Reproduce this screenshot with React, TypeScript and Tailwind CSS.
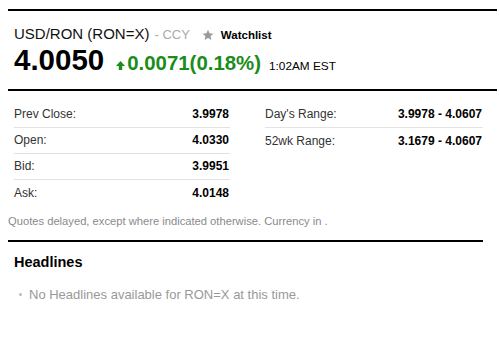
import React from "react";

const leftRows = [
  { label: "Prev Close:", value: "3.9978" },
  { label: "Open:", value: "4.0330" },
  { label: "Bid:", value: "3.9951" },
  { label: "Ask:", value: "4.0148" },
];

const rightRows = [
  { label: "Day's Range:", value: "3.9978 - 4.0607" },
  { label: "52wk Range:", value: "3.1679 - 4.0607" },
];

const QuoteTable = ({ rows, width }: { rows: { label: string; value: string }[]; width: string }) => (
  <div className={width}>
    {rows.map((row, i) => (
      <div
        key={row.label}
        className={`flex h-[26px] items-center justify-between text-[12px] leading-[16px] ${
          i < rows.length - 1 ? "border-b border-[#e3e3e3]" : ""
        }`}
      >
        <span className="text-[#333]">{row.label}</span>
        <span className="font-bold text-black pr-[1px]">{row.value}</span>
      </div>
    ))}
  </div>
);

export default function App() {
  return (
    <div className="w-[499px] h-[355px] bg-white pl-[8px] pt-[9px] font-['Liberation_Sans',Arial,sans-serif] text-black">
      {/* Quote header */}
      <div className="w-[489px] border-y-2 border-black pl-[6px]">
        <div className="flex items-baseline pt-[14px] leading-[18px]">
          <span className="text-[15px] text-[#111]">USD/RON (RON=X)</span>
          <span className="ml-[5px] text-[13px] text-[#aaa]">- CCY</span>
          <svg className="ml-[12px] self-center" width="12" height="12" viewBox="0 0 24 24">
            <path
              d="M12 1.5l3.1 7.1 7.7.7-5.8 5.1 1.7 7.6L12 18l-6.7 4 1.7-7.6-5.8-5.1 7.7-.7z"
              fill="#9a9a9a"
            />
          </svg>
          <span className="ml-[7px] text-[11.5px] font-bold">Watchlist</span>
        </div>
        <div className="mt-[1px] flex items-baseline pb-[13px]">
          <span className="text-[29.5px] font-bold leading-[30px]">4.0050</span>
          <svg className="ml-[12px] mr-[2px]" width="9" height="9" viewBox="0 0 9 9">
            <path d="M4.5 0L9 5H6.2V9H2.8V5H0z" fill="#1a8d1a" />
          </svg>
          <span className="text-[20.4px] font-bold text-[#1a8d1a] leading-[24px]">0.0071(0.18%)</span>
          <span className="ml-[8px] text-[11.8px]">1:02AM EST</span>
        </div>
      </div>

      {/* Quote details */}
      <div className="flex gap-[35px] pl-[6px] pt-[11px]">
        <QuoteTable rows={leftRows} width="w-[216px]" />
        <QuoteTable rows={rightRows} width="w-[218px]" />
      </div>

      <p className="mt-[8px] text-[11.2px] leading-[14px] text-[#8a8a8a]">
        Quotes delayed, except where indicated otherwise. Currency in .
      </p>

      {/* Headlines */}
      <div className="mt-[12px] w-[475px] border-t-2 border-black pl-[6px] pt-[11px]">
        <h2 className="text-[14.5px] font-bold leading-[18px]">Headlines</h2>
        <ul className="mt-[16px]">
          <li className="flex items-center text-[13px] leading-[16px] text-[#999]">
            <span className="ml-[5px] mr-[7px] h-[3px] w-[3px] rounded-full bg-[#bbb]" />
            No Headlines available for RON=X at this time.
          </li>
        </ul>
      </div>
    </div>
  );
}
